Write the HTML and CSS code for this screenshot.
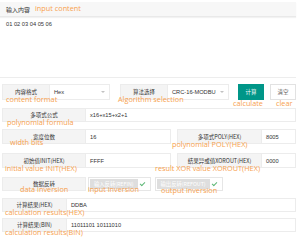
FILE: index.html
```html
<!DOCTYPE html>
<html lang="zh">
<head>
<meta charset="utf-8">
<link rel="stylesheet" href="styles.css">
</head>
<body>
<div class="page">
  <div class="head">
    <span class="head-title">输入内容</span>
    <span class="note note-head">input content</span>
  </div>
  <div class="textarea">01 02 03 04 05 06</div>

  <div class="row row1">
    <div class="label w48">内容格式</div>
    <div class="select w60"><span>Hex</span><i class="arrow"></i></div>
    <div class="label w48 ml10">算法选择</div>
    <div class="select w61"><span>CRC-16-MODBU</span><i class="arrow"></i></div>
    <div class="btn btn-main">计算</div>
    <div class="btn btn-plain">清空</div>
    <span class="note n-format">content format</span>
    <span class="note n-alg">Algorithm selection</span>
    <span class="note n-calc">calculate</span>
    <span class="note n-clear">clear</span>
  </div>

  <div class="row row2">
    <div class="label w84">多项式公式</div>
    <div class="input grow">x16+x15+x2+1</div>
    <span class="note n-poly">polynomial formula</span>
  </div>

  <div class="row row3">
    <div class="label w84">宽度位数</div>
    <div class="input w85">16</div>
    <div class="label w85 ml6">多项式POLY(HEX)</div>
    <div class="input grow">8005</div>
    <span class="note n-width">width bits</span>
    <span class="note n-polyhex">polynomial POLY(HEX)</span>
  </div>

  <div class="row row4">
    <div class="label w84">初始值INIT(HEX)</div>
    <div class="input w85">FFFF</div>
    <div class="label w85 ml6">结果异或值XOROUT(HEX)</div>
    <div class="input grow">0000</div>
    <span class="note n-init">initial value INIT(HEX)</span>
    <span class="note n-xor">result XOR value XOROUT(HEX)</span>
  </div>

  <div class="row row5">
    <div class="label w84">数据反转</div>
    <div class="check ml2"><span class="check-text">输入反转(REFIN)</span><i class="tick"></i></div>
    <div class="check ml4"><span class="check-text">输出反转(REFOUT)</span><i class="tick"></i></div>
    <span class="note n-data">data inversion</span>
    <span class="note n-in">input inversion</span>
    <span class="note n-out">output inversion</span>
  </div>

  <div class="row row6">
    <div class="label w65">计算结果(HEX)</div>
    <div class="input grow">DDBA</div>
    <span class="note n-reshex">calculation results(HEX)</span>
  </div>

  <div class="row row7">
    <div class="label w65">计算结果(BIN)</div>
    <div class="input grow">11011101 10111010</div>
    <span class="note n-resbin">calculation results(BIN)</span>
  </div>
</div>
</body>
</html>
```

FILE: styles.css
```css
* { box-sizing: border-box; }
html, body { margin: 0; padding: 0; background: #fff; }
body {
  width: 297px;
  height: 240px;
  overflow: hidden;
  font-family: "Noto Sans CJK SC", "Liberation Sans", sans-serif;
  font-size: 6px;
  color: #333;
}
.page { padding-top: 2px; padding-right: 1px; }

.head {
  position: relative;
  height: 15px;
  background: #f7f7f7;
  border-bottom: 1px solid #e9e9e9;
  box-shadow: 0 1px 1px rgba(0,0,0,0.05);
  display: flex;
  align-items: center;
  padding-left: 6px;
}
.head-title { font-size: 6px; }

.textarea {
  height: 61px;
  padding: 4px 6px;
  font-family: "Liberation Sans", sans-serif;
  font-size: 5.7px;
  border-bottom: 1px solid #ededed;
}

.row {
  position: relative;
  display: flex;
  align-items: stretch;
  padding-left: 2px;
}
.row1 { margin-top: 6px; height: 16px; }
.row2 { margin-top: 8px; height: 14px; }
.row3 { margin-top: 7px; height: 15px; }
.row4 { margin-top: 9px; height: 15px; }
.row5 { margin-top: 9px; height: 14px; }
.row6 { margin-top: 7px; height: 14px; }
.row7 { margin-top: 6px; height: 14px; }

.label {
  display: flex;
  align-items: center;
  justify-content: center;
  background: #f4f4f4;
  border: 1px solid #ececec;
  font-size: 5.5px;
  white-space: nowrap;
}
.w48 { width: 48px; }
.w84 { width: 84px; }
.w85 { width: 85px; }
.w65 { width: 65px; }
.w60 { width: 60px; }
.w61 { width: 61px; }
.ml10 { margin-left: 10px; }
.ml6 { margin-left: 6px; }
.ml2 { margin-left: 2px; }
.ml4 { margin-left: 4px; }
.grow { flex: 1; }

.input, .select {
  display: flex;
  align-items: center;
  padding-left: 4px;
  border: 1px solid #ececec;
  border-left: none;
  background: #fff;
  font-family: "Liberation Sans", sans-serif;
  font-size: 5.7px;
  color: #333;
  white-space: nowrap;
}
.select { justify-content: space-between; padding-right: 4px; }
.arrow {
  width: 0; height: 0;
  border-left: 2px solid transparent;
  border-right: 2px solid transparent;
  border-top: 2.5px solid #c2c2c2;
}

.btn {
  display: flex;
  align-items: center;
  justify-content: center;
  width: 26px;
  font-size: 5.5px;
}
.btn-main { margin-left: 9px; background: #009688; color: #fff; }
.btn-plain { margin-left: 6px; background: #fff; border: 1px solid #e2e2e2; color: #555; }

.check {
  display: flex;
  align-items: center;
  border: 1px solid #e6e6e6;
  padding: 1px;
  background: #fff;
}
.check-text {
  display: flex;
  align-items: center;
  height: 100%;
  padding: 0 4px;
  background: #dedede;
  color: #fff;
  font-size: 5.3px;
  white-space: nowrap;
}
.check .tick {
  position: relative;
  width: 11px;
  height: 100%;
}
.check .tick::after {
  content: "";
  position: absolute;
  left: 3px;
  top: 2px;
  width: 2px;
  height: 4px;
  border-right: 1px solid #5fb878;
  border-bottom: 1px solid #5fb878;
  transform: rotate(45deg);
}
.row5 .check:first-of-type .check-text { width: 53px; }

.note {
  position: absolute;
  font-family: "Open Sans", "Liberation Sans", sans-serif;
  font-size: 7.3px;
  line-height: 1;
  color: #f7a14e;
  white-space: nowrap;
}
.note-head { left: 35px; top: 3px; }
.n-format { left: 6px; top: 12px; }
.n-alg { left: 118px; top: 12px; }
.n-calc { left: 233px; top: 16px; }
.n-clear { left: 276px; top: 16px; }
.n-poly { left: 7px; top: 11px; }
.n-width { left: 10px; top: 10px; }
.n-polyhex { left: 172px; top: 12px; }
.n-init { left: 5px; top: 12px; }
.n-xor { left: 155px; top: 12px; }
.n-data { left: 20px; top: 9px; }
.n-in { left: 88px; top: 9px; }
.n-out { left: 161px; top: 10px; }
.n-reshex { left: 5px; top: 11px; }
.n-resbin { left: 5px; top: 11px; }
```
